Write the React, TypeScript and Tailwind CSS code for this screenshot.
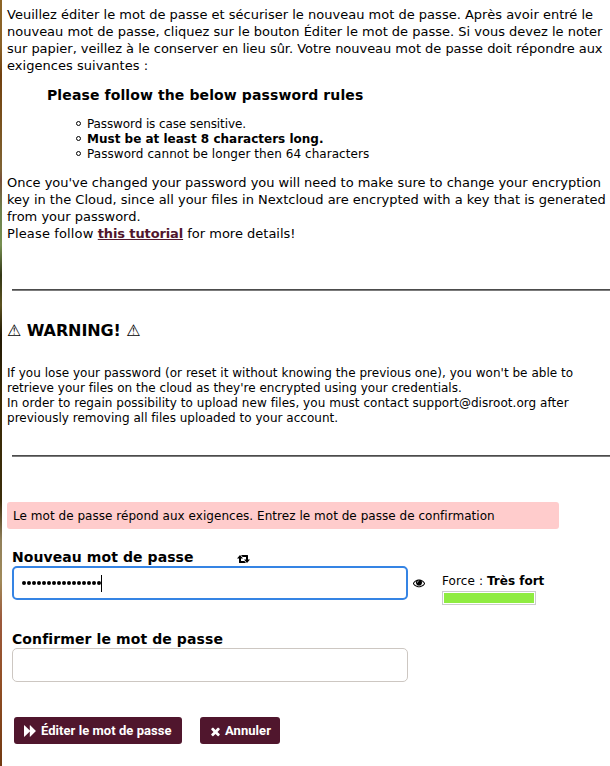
import React from 'react';

function Retweet() {
  return (
    <svg className="h-[8px] w-[13px] shrink-0" viewBox="0 0 13 8" fill="currentColor">
      <path d="M3 0 6 3.4H4V6.1H7.4L9 8H2.5Q2 8 2 7.4V3.4H0ZM4 0h6.5Q11 0 11 .6V4.6H13L10 8 7 4.6H9V1.9H5.6Z" />
    </svg>
  );
}

function Eye() {
  return (
    <svg className="h-[12px] w-[12px] shrink-0" viewBox="0 0 1792 1792" fill="currentColor" stroke="currentColor" strokeWidth="20">
      <path d="M1664 960q-152-236-381-353 61 104 61 225 0 185-131.5 316.5t-316.5 131.5-316.5-131.5-131.5-316.5q0-121 61-225-229 117-381 353 133 205 333.5 326.5t434.5 121.5 434.5-121.5 333.5-326.5zm-720-384q0-20-14-34t-34-14q-125 0-214.5 89.5t-89.5 214.5q0 20 14 34t34 14 34-14 14-34q0-86 61-147t147-61q20 0 34-14t14-34zm848 384q0 34-20 69-140 230-376.5 368.5t-499.5 138.5-499.5-139-376.5-368q-20-35-20-69t20-69q140-229 376.5-368t499.5-139 499.5 139 376.5 368q20 35 20 69z" />
    </svg>
  );
}

function Forward() {
  return (
    <svg className="h-[12px] w-[12px] shrink-0" viewBox="0 0 12 12" fill="currentColor">
      <path d="M0 .4Q0 0 .4.3L5.8 5.6V.4Q5.8 0 6.2.3L11.7 5.7Q12 6 11.7 6.3L6.2 11.7Q5.8 12 5.8 11.6V6.4L.4 11.7Q0 12 0 11.6Z" />
    </svg>
  );
}

function Times() {
  return (
    <svg className="mt-px h-[13px] w-[13px] shrink-0" viewBox="0 0 1792 1792" fill="currentColor">
      <path d="M1490 1322q0 40-28 68l-136 136q-28 28-68 28t-68-28l-294-294-294 294q-28 28-68 28t-68-28l-136-136q-28-28-28-68t28-68l294-294-294-294q-28-28-28-68t28-68l136-136q28-28 68-28t68 28l294 294 294-294q28-28 68-28t68 28l136 136q28 28 28 68t-28 68l-294 294 294 294q28 28 28 68z" />
    </svg>
  );
}

function Rule() {
  return <hr className="ml-[5px] h-[2px] border-0 border-t border-b border-t-[#4c4c4c] border-b-[#7b7b7b]" />;
}

function Bullet({ children }: { children: React.ReactNode }) {
  return (
    <li className="flex h-[15px] items-center">
      <span className="mr-[6px] mb-[2px] h-[5px] w-[5px] rounded-full border border-black" />
      {children}
    </li>
  );
}

export default function App() {
  return (
    <div className="flex h-[766px] w-[610px] overflow-hidden bg-white font-['DejaVu_Sans','Noto_Sans',sans-serif] text-black">
      <div className="w-[2px] shrink-0 bg-[linear-gradient(to_bottom,#8d6526_0px,#8b6228_45px,#71400f_75px,#79511d_120px,#7f6333_168px,#77503a_180px,#6d804b_210px,#779052_245px,#333716_275px,#5b5220_305px,#211804_335px,#392904_400px,#3b2d0b_500px,#91805a_540px,#a08a59_580px,#9c593c_620px,#935026_680px,#713911_766px)]" />
      <main className="w-[608px] shrink-0 pl-[5px] whitespace-nowrap">
        <p className="mt-[6px] text-[13px] leading-[17px]">
          <span className="tracking-[0.01px]">Veuillez éditer le mot de passe et sécuriser le nouveau mot de passe. Après avoir entré le</span><br />
          nouveau mot de passe, cliquez sur le bouton Éditer le mot de passe. Si vous devez le noter<br />
          <span className="tracking-[-0.028px]">sur papier, veillez à le conserver en lieu sûr. Votre nouveau mot de passe doit répondre aux</span><br />
          <span className="tracking-[0.03px]">exigences suivantes :</span>
        </p>
        <h2 className="mt-[12px] ml-[40px] text-[14px] leading-[18px] font-bold tracking-[0.11px]">Please follow the below password rules</h2>
        <ul className="mt-[13px] ml-[69px] text-[12px] leading-[15px]">
          <Bullet><span className="tracking-[-0.11px]">Password is case sensitive.</span></Bullet>
          <Bullet><b>Must be at least 8 characters long.</b></Bullet>
          <Bullet><span className="tracking-[0.06px]">Password cannot be longer then 64 characters</span></Bullet>
        </ul>
        <p className="mt-[12px] text-[13px] leading-[17px]">
          <span className="tracking-[-0.023px]">Once you've changed your password you will need to make sure to change your encryption</span><br />
          key in the Cloud, since all your files in Nextcloud are encrypted with a key that is generated<br />
          from your password.<br />
          <span className="tracking-[0.14px]">Please follow </span><a className="font-bold tracking-[-0.12px] text-[#50162d] underline">this tutorial</a> for more details!
        </p>
        <div className="mt-[47px]"><Rule /></div>
        <h2 className="mt-[30px] text-[16px] leading-[19px] font-bold tracking-[-0.09px]">
          <span className="font-normal">⚠</span> WARNING! <span className="font-normal">⚠</span>
        </h2>
        <p className="mt-[26px] text-[12px] leading-[15px]">
          <span className="tracking-[0.033px]">If you lose your password (or reset it without knowing the previous one), you won't be able to</span><br />
          <span className="tracking-[0.015px]">retrieve your files on the cloud as they're encrypted using your credentials.</span><br />
          <span className="tracking-[0.045px]">In order to regain possibility to upload new files, you must contact support@disroot.org after</span><br />
          <span className="tracking-[0.015px]">previously removing all files uploaded to your account.</span>
        </p>
        <div className="mt-[29px]"><Rule /></div>
        <div className="mt-[45px] flex h-[27px] w-[552px] items-center rounded-[3px] bg-[#ffcccc] pl-[6px] text-[12px] tracking-[0.036px]">
          Le mot de passe répond aux exigences. Entrez le mot de passe de confirmation
        </div>
        <form className="pl-[5px]">
          <div className="mt-[19px] flex h-[18px] items-center text-[14px] font-bold tracking-[0.08px]">
            <label className="w-[225px]">Nouveau mot de passe</label>
            <span className="pt-[4px]"><Retweet /></span>
          </div>
          <div className="flex items-start">
            <div className="flex h-[34px] w-[396px] items-center rounded-[5px] border-2 border-[#3584e4] pl-[8px]">
              <span className="flex gap-[1px]">
                {Array.from({ length: 16 }, (_, i) => (
                  <span key={i} className="h-[4px] w-[4px] rounded-full bg-black" />
                ))}
              </span>
              <span className="h-[17px] w-px bg-black" />
            </div>
            <span className="mt-[11px] ml-[5px]"><Eye /></span>
            <div className="ml-[17px] text-[12px] leading-[15px]">
              <div className="mt-[8px]"><span className="tracking-[0.1px]">Force : </span><b>Très fort</b></div>
              <div className="mt-[2px] h-[14px] w-[94px] border border-[#cccccc] p-px">
                <div className="h-full bg-[#8fec41]" />
              </div>
            </div>
          </div>
          <label className="mt-[25px] block text-[14px] leading-[18px] font-bold tracking-[0.1px]">Confirmer le mot de passe</label>
          <div className="h-[34px] w-[396px] rounded-[5px] border border-[#cdc7c2]" />
          <div className="mt-[35px] ml-[2px] flex gap-[18px] font-['Roboto',sans-serif] text-[13px] font-bold tracking-[0.05px] text-white">
            <button type="button" className="flex h-[27px] w-[168px] items-center gap-[5px] rounded-[3px] bg-[#50162d] pl-[10px]">
              <Forward />Éditer le mot de passe
            </button>
            <button type="button" className="flex h-[27px] w-[80px] items-center gap-[3px] rounded-[3px] bg-[#50162d] pl-[9px]">
              <Times />Annuler
            </button>
          </div>
        </form>
      </main>
    </div>
  );
}
